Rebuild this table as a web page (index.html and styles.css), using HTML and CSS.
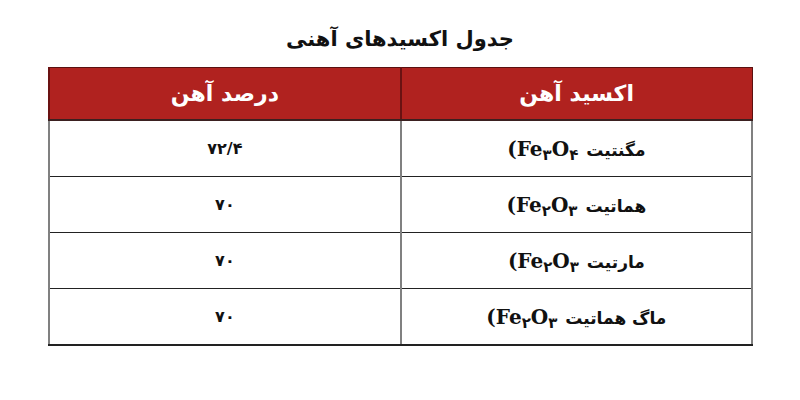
FILE: index.html
```html
<!DOCTYPE html>
<html lang="fa" dir="rtl">
<head>
<meta charset="utf-8">
<link rel="stylesheet" href="styles.css">
</head>
<body>
<div class="page">
  <h1 class="title">جدول اکسیدهای آهنی</h1>
  <table class="tbl">
    <thead>
      <tr><th>اکسید آهن</th><th>درصد آهن</th></tr>
    </thead>
    <tbody>
      <tr><td>مگنتیت <span dir="ltr" class="f">(Fe<sub>۳</sub>O<sub>۴</sub></span></td><td>۷۲/۴</td></tr>
      <tr><td>هماتیت <span dir="ltr" class="f">(Fe<sub>۲</sub>O<sub>۳</sub></span></td><td>۷۰</td></tr>
      <tr><td>مارتیت <span dir="ltr" class="f">(Fe<sub>۲</sub>O<sub>۳</sub></span></td><td>۷۰</td></tr>
      <tr><td>ماگ هماتیت <span dir="ltr" class="f">(Fe<sub>۲</sub>O<sub>۳</sub></span></td><td>۷۰</td></tr>
    </tbody>
  </table>
</div>
</body>
</html>
```
FILE: styles.css
```css
html, body { margin: 0; padding: 0; background: #fff; }
body { font-family: "DejaVu Sans", Tahoma, sans-serif; color: #111; }
.page { width: 800px; height: 400px; padding-top: 25px; box-sizing: border-box; }
.title { margin: 0 0 14px 0; text-align: center; font-size: 21px; font-weight: bold; line-height: 28px; }
.tbl { width: 705px; margin: 0 auto 0 48px; border-collapse: collapse; table-layout: fixed; }
.tbl th, .tbl td { width: 50%; text-align: center; font-weight: bold; }
.tbl th { background: #b0221f; color: #fff; height: 51px; font-size: 22px; padding: 0; border: 1px solid #5a1010; border-bottom: 2px solid #3b2020; border-left: 2px solid #6a1212; }
.tbl td { height: 55px; font-size: 17px; padding: 0; border-top: 1px solid #222; border-bottom: 1px solid #222; border-left: 2px solid #808080; border-right: 2px solid #808080; }
.tbl td:last-child { font-size: 16px; }
.tbl tbody tr:last-child td { border-bottom: 2px solid #222; }
.f { font-family: "DejaVu Serif", serif; font-size: 20px; margin-right: 2px; }
.f sub { font-family: "DejaVu Sans", sans-serif; font-size: 15px; vertical-align: -4px; line-height: 0; }
```
